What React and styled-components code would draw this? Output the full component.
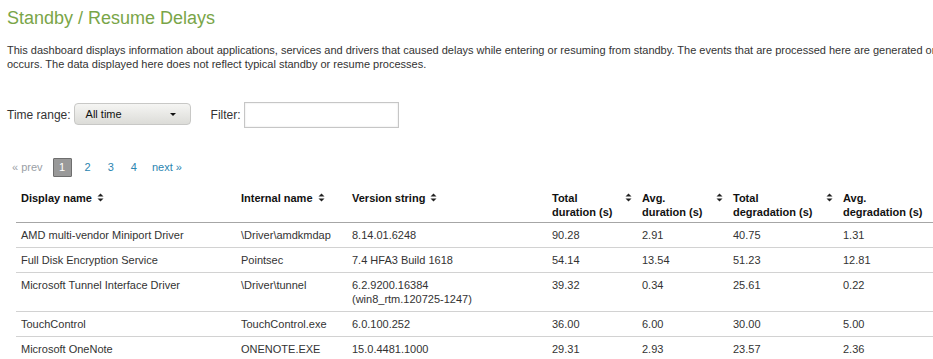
import React from 'react';
import styled, { createGlobalStyle } from 'styled-components';

const GlobalStyle = createGlobalStyle`
  html, body {
    margin: 0;
    padding: 0;
    background: #fff;
    overflow: hidden;
  }
  body {
    font-family: 'Liberation Sans', Arial, sans-serif;
    font-size: 11px;
    color: #333;
  }
`;

const rows = [
  ['AMD multi-vendor Miniport Driver', '\\Driver\\amdkmdap', ['8.14.01.6248'], '90.28', '2.91', '40.75', '1.31'],
  ['Full Disk Encryption Service', 'Pointsec', ['7.4 HFA3 Build 1618'], '54.14', '13.54', '51.23', '12.81'],
  ['Microsoft Tunnel Interface Driver', '\\Driver\\tunnel', ['6.2.9200.16384', '(win8_rtm.120725-1247)'], '39.32', '0.34', '25.61', '0.22'],
  ['TouchControl', 'TouchControl.exe', ['6.0.100.252'], '36.00', '6.00', '30.00', '5.00'],
  ['Microsoft OneNote', 'ONENOTE.EXE', ['15.0.4481.1000'], '29.31', '2.93', '23.57', '2.36'],
];

const columns = [
  { label: 'Display name', width: 220 },
  { label: 'Internal name', width: 111 },
  { label: 'Version string', width: 200 },
  { label: 'Total duration (s)', width: 90, split: ['Total', 'duration (s)'] },
  { label: 'Avg. duration (s)', width: 91, split: ['Avg.', 'duration (s)'] },
  { label: 'Total degradation (s)', width: 110, split: ['Total', 'degradation (s)'] },
  { label: 'Avg. degradation (s)', width: 110, split: ['Avg.', 'degradation (s)'] },
];

const SortIcon = () => (
  <svg width="7" height="9" viewBox="0 0 7 9">
    <path d="M3.5 0.5 L6.5 3.5 L0.5 3.5 Z" fill="#222" />
    <path d="M3.5 8.5 L6.5 5.5 L0.5 5.5 Z" fill="#222" />
  </svg>
);

const Page = styled.div`
  width: 1040px;
  padding: 6px 7px;
`;

const Title = styled.h1`
  margin: 0 0 13px 0;
  font-size: 18px;
  font-weight: normal;
  color: #79a548;
  line-height: 24px;
`;

const Intro = styled.p`
  margin: 0;
  width: 1020px;
  line-height: 14px;
`;

const Controls = styled.div`
  display: flex;
  align-items: center;
  margin-top: 31px;
  height: 26px;
  font-size: 12px;
`;

const Label = styled.label`
  margin-right: 3px;
`;

const SelectBox = styled.div`
  width: 117px;
  height: 22px;
  box-sizing: border-box;
  padding: 0 11px 0 11px;
  display: flex;
  align-items: center;
  justify-content: space-between;
  border: 1px solid #c8c8c6;
  border-radius: 4px;
  background: linear-gradient(#f5f5f3, #dcdcd8);
  color: #111;
  font-size: 11px;
  margin-right: 20px;
  margin-top: -2px;
`;

const Caret = styled.span`
  width: 0;
  height: 0;
  border-left: 3px solid transparent;
  border-right: 3px solid transparent;
  border-top: 3px solid #111;
  margin-right: 3px;
`;

const FilterInput = styled.input`
  width: 155px;
  height: 26px;
  box-sizing: border-box;
  border: 1px solid #c6c6c6;
  box-shadow: inset 0 0 2px #ddd;
  margin: 0;
  outline: none;
  font: inherit;
`;

const Pager = styled.div`
  display: flex;
  align-items: center;
  margin: 29px 0 0 5px;
  height: 20px;
  font-size: 11px;
`;

const PageLink = styled.span`
  color: ${p => (p.disabled ? '#9aa0a6' : '#2b85b0')};
  margin-right: ${p => p.gap || 0}px;
`;

const PageCurrent = styled.span`
  background: #999;
  color: #fff;
  width: 19px;
  height: 19px;
  display: flex;
  align-items: center;
  justify-content: center;
  border: 1px solid #6e6e6e;
  border-radius: 1px;
  box-sizing: border-box;
  margin-right: 13px;
`;

const Table = styled.table`
  border-collapse: separate;
  border-spacing: 0;
  margin: 8px 0 0 9px;
  table-layout: fixed;
`;

const Th = styled.th`
  text-align: left;
  vertical-align: top;
  font-weight: bold;
  color: #111;
  padding: 6px 5px 3px 5px;
  line-height: 14px;
  border-bottom: 1px solid #a6a6a6;
`;

const HeadInner = styled.div`
  display: flex;
  align-items: flex-start;
  justify-content: ${p => (p.$split ? 'space-between' : 'flex-start')};
  gap: 5px;
`;

const IconWrap = styled.span`
  display: inline-flex;
  padding-top: 2px;
`;

const Td = styled.td`
  padding: 5px 5px 5px 5px;
  line-height: 14px;
  vertical-align: top;
  border-bottom: 1px solid #d2d2d2;
`;

const Line = styled.div``;

export default function App() {
  return (
    <Page>
      <GlobalStyle />
      <Title>Standby / Resume Delays</Title>
      <Intro>
        This dashboard displays information about applications, services and drivers that caused delays while entering or
        resuming from standby. The events that are processed here are generated only when a delay occurs. The data
        displayed here does not reflect typical standby or resume processes.
      </Intro>
      <Controls>
        <Label>Time range:</Label>
        <SelectBox>
          <span>All time</span>
          <Caret />
        </SelectBox>
        <Label>Filter:</Label>
        <FilterInput type="text" />
      </Controls>
      <Pager>
        <PageLink disabled gap={10}>« prev</PageLink>
        <PageCurrent>1</PageCurrent>
        <PageLink gap={17}>2</PageLink>
        <PageLink gap={17}>3</PageLink>
        <PageLink gap={15}>4</PageLink>
        <PageLink>next »</PageLink>
      </Pager>
      <Table>
        <colgroup>
          {columns.map(c => (
            <col key={c.label} style={{ width: c.width }} />
          ))}
        </colgroup>
        <thead>
          <tr>
            {columns.map(c => (
              <Th key={c.label}>
                <HeadInner $split={!!c.split}>
                  {c.split ? (
                    <span>
                      {c.split[0]}
                      <br />
                      {c.split[1]}
                    </span>
                  ) : (
                    <span>{c.label}</span>
                  )}
                  <IconWrap>
                    <SortIcon />
                  </IconWrap>
                </HeadInner>
              </Th>
            ))}
          </tr>
        </thead>
        <tbody>
          {rows.map(r => (
            <tr key={r[0]}>
              {r.map((cell, i) => (
                <Td key={i}>
                  {Array.isArray(cell) ? cell.map(l => <Line key={l}>{l}</Line>) : cell}
                </Td>
              ))}
            </tr>
          ))}
        </tbody>
      </Table>
    </Page>
  );
}
